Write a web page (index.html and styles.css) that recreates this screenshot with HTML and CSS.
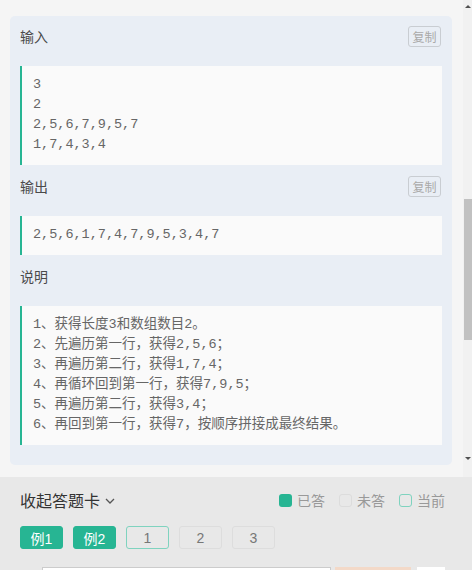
FILE: index.html
```html
<!DOCTYPE html>
<html lang="zh">
<head>
<meta charset="utf-8">
<link rel="stylesheet" href="styles.css">
</head>
<body>
<div class="scroll-area">
  <div class="content">
    <div class="card">
      <div class="sec-head">
        <span class="sec-title">输入</span>
        <button class="copy-btn">复制</button>
      </div>
      <div class="block">3
2
2,5,6,7,9,5,7
1,7,4,3,4</div>
      <div class="sec-head next">
        <span class="sec-title">输出</span>
        <button class="copy-btn">复制</button>
      </div>
      <div class="block">2,5,6,1,7,4,7,9,5,3,4,7</div>
      <div class="sec-head next">
        <span class="sec-title">说明</span>
      </div>
      <div class="block">1、获得长度3和数组数目2。
2、先遍历第一行，获得2,5,6；
3、再遍历第二行，获得1,7,4；
4、再循环回到第一行，获得7,9,5；
5、再遍历第二行，获得3,4；
6、再回到第一行，获得7，按顺序拼接成最终结果。</div>
    </div>
  </div>
  <div class="scrollbar">
    <div class="arrow up"></div>
    <div class="track"><div class="thumb"></div></div>
    <div class="arrow down"></div>
  </div>
</div>
<div class="answer-panel">
  <div class="panel-head">
    <div class="collapse">收起答题卡
      <svg class="chev" width="10" height="6" viewBox="0 0 10 6"><path d="M1 1 L5 5 L9 1" fill="none" stroke="#555" stroke-width="1.3"/></svg>
    </div>
    <div class="legend">
      <span class="lg-item"><span class="sq done"></span>已答</span>
      <span class="lg-item"><span class="sq todo"></span>未答</span>
      <span class="lg-item"><span class="sq cur"></span>当前</span>
    </div>
  </div>
  <div class="q-row">
    <span class="q done">例1</span>
    <span class="q done">例2</span>
    <span class="q cur">1</span>
    <span class="q">2</span>
    <span class="q">3</span>
  </div>
  <div class="bottom-strip">
    <span class="input-edge"></span>
    <span class="orange-edge"></span>
    <span class="white-edge"></span>
  </div>
</div>
</body>
</html>
```
FILE: styles.css
```css
* { box-sizing: border-box; }
html, body {
  margin: 0;
  padding: 0;
  width: 472px;
  height: 570px;
  overflow: hidden;
  font-family: "Noto Sans CJK SC", "Liberation Sans", sans-serif;
}
.scroll-area {
  height: 477px;
  display: flex;
  background: #f5f5f5;
}
.content {
  flex: 1;
  padding: 16px 11px 12px 10px;
}
.card {
  background: #e9eef5;
  border-radius: 5px;
  padding: 10px 10px 20px;
}
.sec-head {
  height: 21px;
  display: flex;
  align-items: center;
  justify-content: space-between;
}
.sec-head.next { margin-top: 11px; }
.sec-title {
  font-size: 14px;
  color: #4a4a4a;
  line-height: 21px;
}
.copy-btn {
  width: 33px;
  height: 21px;
  margin-right: 1px;
  padding: 0;
  border: 1px solid #c9cdd2;
  border-radius: 3px;
  background: transparent;
  color: #a9a9a9;
  font-family: "Noto Sans CJK SC", sans-serif;
  font-size: 12px;
  line-height: 19px;
}
.block {
  margin-top: 19px;
  background: #fafafa;
  border-left: 2px solid #27b593;
  padding: 9px 11px 10px 11px;
  font-family: "Liberation Mono", "Noto Sans CJK SC", monospace;
  font-size: 13.5px;
  line-height: 20px;
  color: #666;
  white-space: pre;
}
.scrollbar {
  width: 9px;
  display: flex;
  flex-direction: column;
  background: #f1f1f1;
}
.arrow {
  height: 12px;
  display: flex;
  align-items: center;
  justify-content: center;
}
.arrow.up::before {
  content: "";
  border-left: 3px solid transparent;
  border-right: 3px solid transparent;
  border-bottom: 3px solid #505050;
}
.arrow.down::before {
  content: "";
  border-left: 3px solid transparent;
  border-right: 3px solid transparent;
  border-top: 3px solid #505050;
}
.arrow.down { margin-bottom: 13px; }
.track {
  flex: 1;
  padding-top: 187px;
}
.thumb {
  height: 141px;
  margin-left: 1px;
  background: #c1c1c1;
}
.answer-panel {
  height: 93px;
  background: #e8e8e8;
  padding: 11px 27px 0 20px;
}
.panel-head {
  height: 24px;
  display: flex;
  align-items: center;
  justify-content: space-between;
}
.collapse {
  font-size: 16px;
  color: #333;
  display: flex;
  align-items: center;
}
.chev { margin-left: 5px; margin-top: 2px; }
.legend {
  display: flex;
  gap: 14px;
  font-size: 14px;
  color: #999;
}
.lg-item {
  display: flex;
  align-items: center;
  gap: 5px;
}
.sq {
  width: 13px;
  height: 13px;
  border-radius: 3px;
}
.sq.done { background: #27b593; }
.sq.todo { border: 1px solid #dcdcdc; }
.sq.cur { border: 1px solid #7fd3bf; }
.q-row {
  margin-top: 14px;
  display: flex;
  gap: 10px;
}
.q {
  width: 43px;
  height: 23px;
  border-radius: 3px;
  border: 1px solid #dddddd;
  display: flex;
  align-items: center;
  justify-content: center;
  font-family: "Liberation Sans", "Noto Sans CJK SC", sans-serif;
  font-size: 14px;
  color: #777;
}
.q.done {
  background: #27b593;
  border-color: #27b593;
  color: #fff;
}
.q.cur {
  border-color: #7fd3bf;
}
.bottom-strip {
  margin-top: 18px;
  height: 3px;
  display: flex;
  margin-left: 22px;
}
.input-edge {
  width: 306px;
  background: #fff;
  border: 1px solid #ccc;
  border-bottom: none;
}
.orange-edge {
  width: 80px;
  margin-left: 4px;
  background: #f3d9c8;
}
.white-edge {
  width: 30px;
  margin-left: 6px;
  background: #fff;
}
```
